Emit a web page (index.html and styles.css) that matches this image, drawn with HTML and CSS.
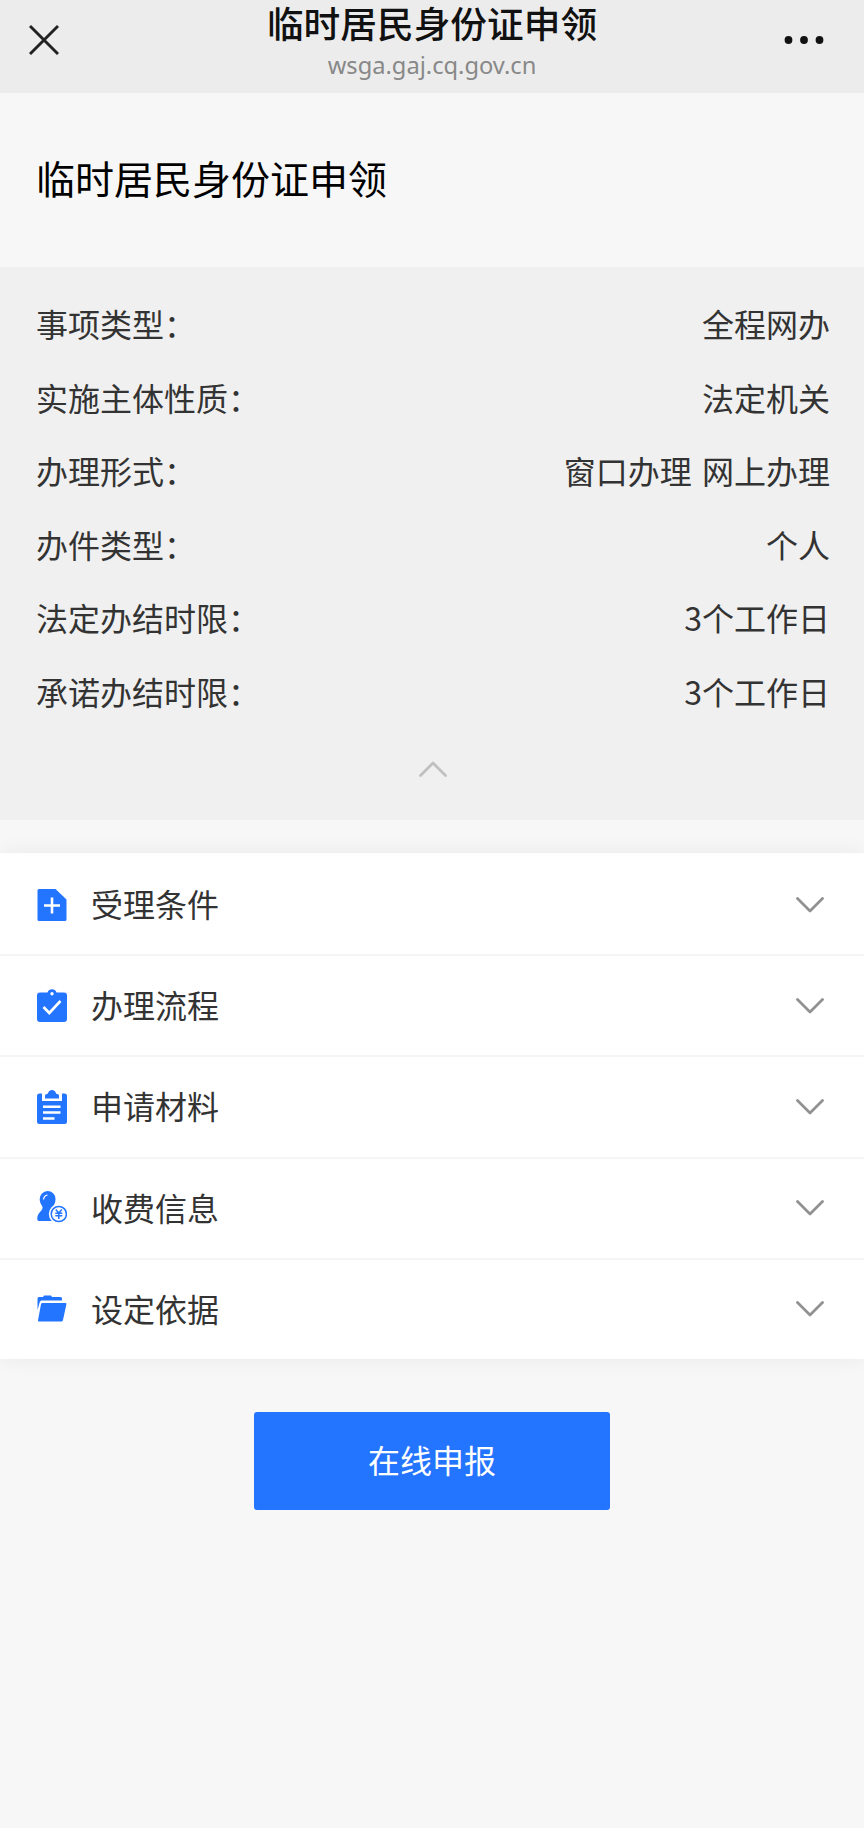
FILE: index.html
```html
<!DOCTYPE html>
<html lang="zh-CN">
<head>
    <meta charset="UTF-8">
    <meta name="viewport" content="width=device-width, initial-scale=1.0">
    <title>临时居民身份证申领</title>
    <link rel="stylesheet" href="styles.css">
</head>
<body>
    <!-- TOP BAR -->
    <header class="top-bar">
        <svg class="close-icon" viewBox="0 0 30 30">
            <path d="M1 1L29 29M29 1L1 29"/>
        </svg>
        <div class="top-center">
            <div class="top-title">临时居民身份证申领</div>
            <div class="top-url">wsga.gaj.cq.gov.cn</div>
        </div>
        <svg class="more-icon" viewBox="0 0 40 8">
            <circle cx="4.5" cy="4" r="3.9"/>
            <circle cx="20" cy="4" r="3.9"/>
            <circle cx="35.5" cy="4" r="3.9"/>
        </svg>
    </header>

    <h1 class="page-title">临时居民身份证申领</h1>

    <!-- BASIC INFO -->
    <section class="info">
        <div class="info-row"><span>事项类型：</span><span>全程网办</span></div>
        <div class="info-row"><span>实施主体性质：</span><span>法定机关</span></div>
        <div class="info-row"><span>办理形式：</span><span>窗口办理 网上办理</span></div>
        <div class="info-row"><span>办件类型：</span><span>个人</span></div>
        <div class="info-row"><span>法定办结时限：</span><span>3个工作日</span></div>
        <div class="info-row"><span>承诺办结时限：</span><span>3个工作日</span></div>
        <svg class="arrow arrow-up" viewBox="0 0 28 16">
            <path d="M1.5 14.5L14 2L26.5 14.5"/>
        </svg>
    </section>

    <!-- DETAIL LIST -->
    <ul class="list">
        <li class="list-item">
            <svg class="item-icon" viewBox="0 0 30 36">
                <path d="M2 2H18.5L29.5 12.5V32.5a1.5 1.5 0 0 1-1.5 1.5H2a1.5 1.5 0 0 1-1.5-1.5V3.5A1.5 1.5 0 0 1 2 2z"/>
                <path class="line" d="M7 18.5H23M15 10.5V26.5"/>
            </svg>
            <span class="item-name">受理条件</span>
            <svg class="arrow" viewBox="0 0 28 16"><path d="M1.5 1.5L14 14L26.5 1.5"/></svg>
        </li>
        <li class="list-item">
            <svg class="item-icon" viewBox="0 0 30 36">
                <path d="M3 4.5H10.5a4.8 4.8 0 0 1 9 0H27a3 3 0 0 1 3 3V31a3 3 0 0 1-3 3H3a3 3 0 0 1-3-3V7.5a3 3 0 0 1 3-3z"/>
                <circle class="hole" cx="15" cy="5.8" r="1.7"/>
                <path class="line" d="M6.5 19L12.3 25L23.5 13"/>
            </svg>
            <span class="item-name">办理流程</span>
            <svg class="arrow" viewBox="0 0 28 16"><path d="M1.5 1.5L14 14L26.5 1.5"/></svg>
        </li>
        <li class="list-item">
            <svg class="item-icon" viewBox="0 0 30 36">
                <path d="M2.500 4.500H5V12H25V4.500H27.500A2.500 2.500 0 0 1 30 7V32.500a2.500 2.500 0 0 1-2.500 2.500H2.500A2.500 2.500 0 0 1 0 32.500V7a2.500 2.500 0 0 1 2.500-2.500z"/>
                <path d="M8 9.500V6.500Q8 5 10 5C11.500 5 11 1 15 1S18.500 5 20 5Q22 5 22 6.500V9.500z"/>
                <path class="line" d="M6 17.800H23.500M6 23.500H23.500M6 29.500H17.500"/>
            </svg>
            <span class="item-name">申请材料</span>
            <svg class="arrow" viewBox="0 0 28 16"><path d="M1.5 1.5L14 14L26.5 1.5"/></svg>
        </li>
        <li class="list-item">
            <svg class="item-icon" viewBox="0 0 30 36">
                <path d="M10.5 1a8 8 0 0 1 8 8c0 3-1 5.5-2.7 7.5-1 1.5-.5 2.500.7 3L18 31H2Q0 31 .3 28C.8 23 4 21.500 5 19.500 6 17.500 5.500 16.500 4.500 15 3.200 13 2.700 11 2.700 9A8 8 0 0 1 10.500 1z"/>
                <path class="shine" d="M6.500 9.500Q7 5.500 10.500 5"/>
                <circle class="hole" cx="21.8" cy="24" r="10"/>
                <circle class="ring" cx="21.8" cy="24" r="7.6"/>
                <path class="yen" d="M18.8 19.5L21.8 23L24.8 19.5M18.3 23.2H25.3M18.3 25.8H25.3M21.8 23V29"/>
            </svg>
            <span class="item-name">收费信息</span>
            <svg class="arrow" viewBox="0 0 28 16"><path d="M1.5 1.5L14 14L26.5 1.5"/></svg>
        </li>
        <li class="list-item">
            <svg class="item-icon" viewBox="0 0 30 36">
                <path d="M2 6H6L7 4.5H14L15 6H23.5Q25 6 25 7.5V9.5H4.5Q3.3 9.5 2.8 11L.5 19V7.5Q.5 6 2 6z"/>
                <path d="M5.5 12H28.5Q29.7 12 29.4 13.3L26 29Q25.6 30.5 24.5 30.5H1.8Q.7 30.5 1 29.3L4 13.3Q4.3 12 5.5 12z"/>
            </svg>
            <span class="item-name">设定依据</span>
            <svg class="arrow" viewBox="0 0 28 16"><path d="M1.5 1.5L14 14L26.5 1.5"/></svg>
        </li>
    </ul>

    <button class="apply-btn" type="button">在线申报</button>
</body>
</html>
```
FILE: styles.css
```css
:root {
    --primary-color: #2374ff;
    --bg-color: #f7f7f7;
    --text-color: #333;
}

* {
    box-sizing: border-box;
}

body {
    margin: 0;
    min-height: 100vh;
    background: var(--bg-color);
    color: var(--text-color);
    font-family: "Noto Sans CJK SC", sans-serif;
    font-size: 32px;
}

svg {
    display: block;
    flex-shrink: 0;
}

/* TOP BAR */
.top-bar {
    display: flex;
    align-items: flex-start;
    justify-content: space-between;
    height: 93px;
    padding: 0 40px 0 29px;
    background: #ececec;
}

.close-icon {
    width: 30px;
    height: 30px;
    margin-top: 25px;
    margin-right: 10px;
    fill: none;
    stroke: #222;
    stroke-width: 2.9;
}

.top-center {
    padding-left: 11px;
    text-align: center;
}

.top-title {
    height: 49px;
    line-height: 44px;
    font-size: 36.7px;
    font-weight: 500;
    color: #111;
}

.top-url {
    line-height: 33px;
    font-family: "Noto Sans", sans-serif;
    font-size: 23.7px;
    color: #888;
}

.more-icon {
    width: 40px;
    height: 8px;
    margin-top: 36px;
    fill: #111;
}

.page-title {
    margin: 0;
    height: 174px;
    padding-left: 36px;
    line-height: 169px;
    font-size: 39px;
    font-weight: 400;
    color: #000;
}

/* BASIC INFO */
.info {
    height: 553px;
    padding: 20px 34px 0 36px;
    background: #f0f0f0;
}

.info-row {
    display: flex;
    justify-content: space-between;
    height: 73.6px;
    line-height: 73.6px;
    word-spacing: 3px;
}

.arrow {
    width: 28px;
    height: 16px;
    fill: none;
    stroke: #919191;
    stroke-width: 2.8;
    stroke-linecap: round;
    stroke-linejoin: round;
}

.arrow-up {
    margin: 32px auto 0;
    stroke: #c0c0c0;
}

/* DETAIL LIST */
.list {
    margin: 33px 0 0;
    padding: 0;
    list-style: none;
    background: #fff;
    box-shadow: 0 0 20px rgba(0, 0, 0, 0.06);
}

.list-item {
    display: flex;
    align-items: center;
    height: 101.2px;
    padding: 0 40px 0 37px;
    border-top: 2px solid #f5f5f5;
}

.list-item:first-child {
    border-top-color: #fff;
}

.item-icon {
    width: 30px;
    height: 36px;
    fill: var(--primary-color);
}

.item-icon .hole {
    fill: #fff;
}

.item-icon .line,
.item-icon .shine {
    fill: none;
    stroke: #fff;
    stroke-width: 2.6;
}

.item-icon .shine {
    stroke-width: 1.2;
}

.item-icon .ring,
.item-icon .yen {
    fill: none;
    stroke: var(--primary-color);
    stroke-width: 1.5;
}

.item-name {
    flex: 1;
    margin-left: 24px;
    padding-bottom: 3px;
    line-height: 44px;
}

.apply-btn {
    display: block;
    width: 356px;
    height: 98px;
    margin: 53px auto 0;
    padding: 0 0 4px;
    border: none;
    border-radius: 3px;
    background: var(--primary-color);
    color: #fff;
    font-family: inherit;
    font-size: 32px;
}
```
